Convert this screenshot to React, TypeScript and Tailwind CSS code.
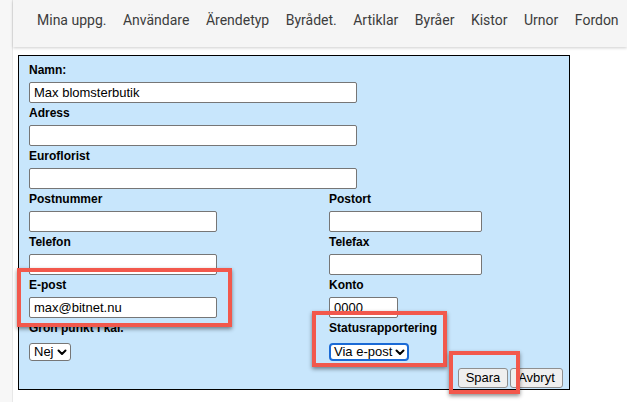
import React from "react";

const navItems = [
  "Mina uppg.",
  "Användare",
  "Ärendetyp",
  "Byrådet.",
  "Artiklar",
  "Byråer",
  "Kistor",
  "Urnor",
  "Fordon",
];

const Chevron: React.FC = () => (
  <svg width="10" height="7" viewBox="0 0 10 7" className="ml-[3px]">
    <path
      d="M1.5 1.5 L5 5 L8.5 1.5"
      fill="none"
      stroke="#000"
      strokeWidth="2"
      strokeLinecap="round"
      strokeLinejoin="round"
    />
  </svg>
);

const Field: React.FC<{
  label: string;
  value?: string;
  width: string;
}> = ({ label, value = "", width }) => (
  <div className="h-[43px]">
    <div className="h-[20px] text-[12px] leading-[16px] font-bold text-black">
      {label}
    </div>
    <div
      className={`${width} h-[21px] bg-white border border-[#767676] rounded-[2px] px-[4px] text-[13px] leading-[19px] text-black`}
    >
      {value}
    </div>
  </div>
);

const Highlight: React.FC<{ className: string }> = ({ className }) => (
  <div
    className={`absolute border-[4px] border-[#f2584c] shadow-[0_2px_4px_rgba(0,0,0,0.45)] pointer-events-none ${className}`}
  />
);

export default function App() {
  return (
    <div
      className="relative w-[627px] h-[402px] overflow-hidden bg-white flex"
      style={{ fontFamily: '"Liberation Sans", Arial, sans-serif' }}
    >
      {/* Left strip */}
      <div className="w-[13px] h-full bg-[#f7f7f7] border-r border-[#e8e8e8]" />

      <div className="flex-1 flex flex-col">
        {/* Header nav */}
        <header className="h-[47px] bg-[#f5f5f5] shadow-[0_1px_3px_rgba(0,0,0,0.2)] flex items-start pt-[11px] pl-[24px] gap-[16.5px] font-['Roboto',sans-serif] text-[14px] leading-[18px] text-[#3c3c3c] whitespace-nowrap">
          {navItems.map((n) => (
            <span key={n}>{n}</span>
          ))}
        </header>

        {/* Form box */}
        <div className="ml-[5px] mt-[8px] w-[552px] h-[335px] border border-black bg-[#c8e6fc] pl-[10px] pt-[6px]">
          <Field label="Namn:" value="Max blomsterbutik" width="w-[328px]" />
          <Field label="Adress" width="w-[328px]" />
          <Field label="Euroflorist" width="w-[328px]" />

          <div className="grid grid-cols-[300px_1fr]">
            <Field label="Postnummer" width="w-[188px]" />
            <Field label="Postort" width="w-[153px]" />
            <Field label="Telefon" width="w-[188px]" />
            <Field label="Telefax" width="w-[153px]" />
            <Field label="E-post" value="max@bitnet.nu" width="w-[188px]" />
            <Field label="Konto" value="0000" width="w-[69px]" />

            <div>
              <div className="h-[19px] text-[12px] leading-[16px] font-bold text-black">
                Grön punkt i kal.
              </div>
              <div className="inline-flex items-center h-[18px] bg-white border border-[#767676] rounded-[3px] pl-[4px] pr-[3px] text-[13px] leading-[16px] text-black">
                Nej
                <Chevron />
              </div>
            </div>
            <div>
              <div className="h-[19px] text-[12px] leading-[16px] font-bold text-black">
                Statusrapportering
              </div>
              <div className="inline-flex items-center h-[18px] bg-white border-[2px] border-[#1a6ad6] rounded-[4px] pl-[3px] pr-[2px] text-[13px] leading-[16px] text-black">
                Via e-post
                <Chevron />
              </div>
            </div>
          </div>

          <div className="flex justify-end gap-[2px] mt-[5px] pr-[6px]">
            <button className="h-[20px] w-[50px] bg-[#efefef] border border-[#8f8f8f] rounded-[3px] text-[13px] leading-[18px] text-black">
              Spara
            </button>
            <button className="h-[20px] w-[53px] bg-[#efefef] border border-[#8f8f8f] rounded-[3px] text-[13px] leading-[18px] text-black">
              Avbryt
            </button>
          </div>
        </div>
      </div>

      {/* Annotation boxes */}
      <Highlight className="left-[17px] top-[268px] w-[215px] h-[59px]" />
      <Highlight className="left-[312px] top-[311px] w-[135px] h-[56px]" />
      <Highlight className="left-[449px] top-[351px] w-[71px] h-[43px]" />
    </div>
  );
}
